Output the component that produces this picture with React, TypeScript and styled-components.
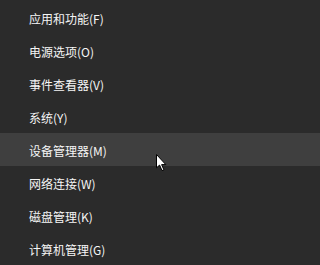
import React from "react";
import styled, { createGlobalStyle } from "styled-components";

const Global = createGlobalStyle`
  html, body { margin: 0; padding: 0; background: #2b2b2b; }
  body { min-width: 208px; height: 265px; overflow: hidden; }
`;

const Menu = styled.ul`
  position: relative;
  list-style: none;
  margin: 0;
  padding: 1px 0 0 0;
  width: 100%;
  height: 265px;
  box-sizing: border-box;
  background: #2b2b2b;
  font-family: "Noto Sans CJK SC", "Noto Sans", sans-serif;
  font-size: 12px;
  color: #f5f5f5;
`;

const Item = styled.li<{ $active?: boolean }>`
  display: flex;
  align-items: center;
  height: 33px;
  padding: 2px 0 0 29px;
  box-sizing: border-box;
  background: ${(p) => (p.$active ? "#3f3f3f" : "transparent")};
  white-space: nowrap;
`;

const Cursor = styled.svg`
  position: absolute;
  left: 156px;
  top: 154px;
  width: 11px;
  height: 19px;
  overflow: visible;
`;

const items = [
  "应用和功能(F)",
  "电源选项(O)",
  "事件查看器(V)",
  "系统(Y)",
  "设备管理器(M)",
  "网络连接(W)",
  "磁盘管理(K)",
  "计算机管理(G)",
];

export default function App() {
  return (
    <>
      <Global />
      <Menu>
        {items.map((t, i) => (
          <Item key={t} $active={i === 4}>
            {t}
          </Item>
        ))}
        <Cursor viewBox="0 0 11 19">
          <path
            d="M0.5 0.5 L0.5 13.8 L3.6 11.1 L6 16.6 L7.9 15.8 L5.6 10.6 L9.8 10.6 Z"
            fill="#ffffff"
            stroke="#000000"
            strokeWidth="1"
            strokeLinejoin="miter"
          />
        </Cursor>
      </Menu>
    </>
  );
}
